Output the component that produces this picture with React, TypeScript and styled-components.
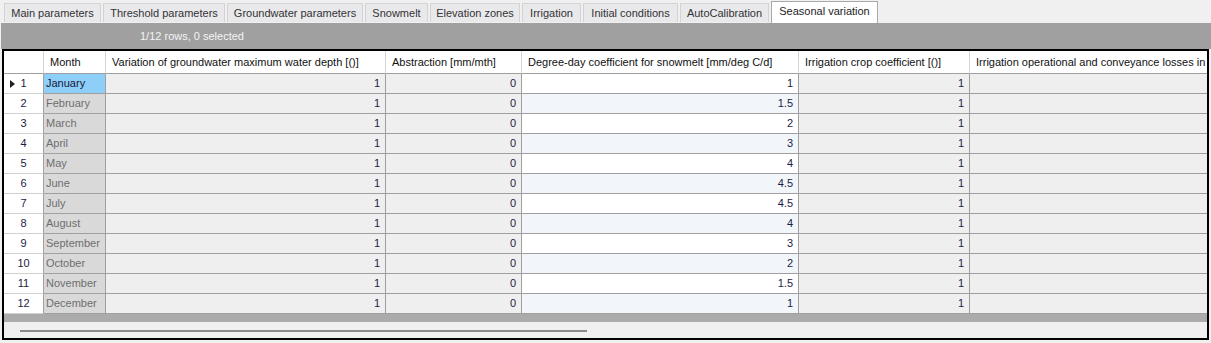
import React from "react";
import styled, { createGlobalStyle, css } from "styled-components";

const GlobalStyle = createGlobalStyle`
  html, body {
    margin: 0;
    padding: 0;
    background-color: #f0f0f0;
  }
  body {
    font-family: "Liberation Sans", Arial, sans-serif;
    font-size: 11px;
  }
`;

const COLUMNS = "40px 62px 280px 136px 277px 171px 320px";

const Page = styled.div`
  width: 1211px;
  height: 343px;
  overflow: hidden;
  background-color: #f0f0f0;
`;

const TabStrip = styled.div`
  display: flex;
  align-items: flex-start;
  gap: 2px;
  height: 23px;
  padding-left: 4px;
`;

const Tab = styled.div<{ $width: number; $active?: boolean }>`
  box-sizing: border-box;
  flex: 0 0 ${(p) => p.$width}px;
  height: 19px;
  margin-top: 3px;
  border: 1px solid #d3d3d6;
  border-bottom: none;
  background-color: #e9e9ec;
  color: #333;
  text-align: center;
  line-height: 18px;
  white-space: nowrap;
  overflow: hidden;

  ${(p) =>
    p.$active &&
    css`
      height: 22px;
      margin-top: 1px;
      border-color: #a9a9a9;
      background-color: #fff;
      color: #222;
      line-height: 19px;
    `}
`;

const StatusBar = styled.div`
  height: 26px;
  margin: 0 0 0 1px;
  background-color: #a0a0a0;
`;

const StatusText = styled.div`
  padding-left: 139px;
  line-height: 27px;
  color: #f4f4f4;
`;

const Grid = styled.div`
  box-sizing: border-box;
  width: 1207px;
  margin-left: 2px;
  border: 2px solid #000;
  overflow: hidden;
  background-color: #f0f0f0;
`;

const GridRow = styled.div<{ $header?: boolean }>`
  display: grid;
  grid-template-columns: ${COLUMNS};
  height: ${(p) => (p.$header ? 23 : 20)}px;
`;

const cellBase = css`
  box-sizing: border-box;
  border-right: 1px solid #a0a0a0;
  border-bottom: 1px solid #a0a0a0;
  white-space: nowrap;
  overflow: hidden;
`;

const HeaderCell = styled.div`
  ${cellBase};
  border-right-color: #d4d4d4;
  background-color: #fff;
  color: #111;
  padding-left: 6px;
  line-height: 22px;
`;

const RowHeaderCell = styled.div`
  ${cellBase};
  border-bottom-color: #d0d0d0;
  border-right-color: #a0a0a0;
  background-color: #fff;
  color: #1c1c44;
  text-align: center;
  line-height: 19px;
  position: relative;
`;

const RowMarker = styled.span`
  position: absolute;
  left: 6px;
  top: 6px;
  width: 0;
  height: 0;
  border-top: 4px solid transparent;
  border-bottom: 4px solid transparent;
  border-left: 5px solid #222;
`;

const MonthCell = styled.div<{ $selected?: boolean }>`
  ${cellBase};
  background-color: ${(p) => (p.$selected ? "#8dcff8" : "#d9d9d9")};
  color: ${(p) => (p.$selected ? "#161638" : "#6e6e6e")};
  padding-left: 2px;
  line-height: 19px;
`;

const NumCell = styled.div<{ $tone?: "plain" | "white" | "blue" }>`
  ${cellBase};
  background-color: ${(p) =>
    p.$tone === "white" ? "#fff" : p.$tone === "blue" ? "#f2f5fa" : "#efefef"};
  color: #1c1c44;
  text-align: right;
  padding-right: 5px;
  line-height: 19px;
`;

const BottomBand = styled.div`
  height: 8px;
  background-color: #ababab;
`;

const ScrollArea = styled.div`
  height: 16px;
  padding: 8px 0 0 16px;
  box-sizing: border-box;
  background-color: #f0f0f0;
`;

const ScrollThumb = styled.div`
  width: 567px;
  height: 2px;
  background-color: #8a8a8a;
`;

const tabs = [
  { label: "Main parameters", width: 97 },
  { label: "Threshold parameters", width: 122 },
  { label: "Groundwater parameters", width: 136 },
  { label: "Snowmelt", width: 63 },
  { label: "Elevation zones", width: 90 },
  { label: "Irrigation", width: 59 },
  { label: "Initial conditions", width: 95 },
  { label: "AutoCalibration", width: 89 },
  { label: "Seasonal variation", width: 107, active: true },
];

const headers = [
  "",
  "Month",
  "Variation of groundwater maximum water depth [()]",
  "Abstraction [mm/mth]",
  "Degree-day coefficient for snowmelt [mm/deg C/d]",
  "Irrigation crop coefficient [()]",
  "Irrigation operational and conveyance losses in percent [%]",
];

const rows = [
  { month: "January", degree: "1" },
  { month: "February", degree: "1.5" },
  { month: "March", degree: "2" },
  { month: "April", degree: "3" },
  { month: "May", degree: "4" },
  { month: "June", degree: "4.5" },
  { month: "July", degree: "4.5" },
  { month: "August", degree: "4" },
  { month: "September", degree: "3" },
  { month: "October", degree: "2" },
  { month: "November", degree: "1.5" },
  { month: "December", degree: "1" },
];

export default function App() {
  return (
    <Page>
      <GlobalStyle />
      <TabStrip>
        {tabs.map((t) => (
          <Tab key={t.label} $width={t.width} $active={t.active}>
            {t.label}
          </Tab>
        ))}
      </TabStrip>
      <StatusBar>
        <StatusText>1/12 rows, 0 selected</StatusText>
      </StatusBar>
      <Grid>
        <GridRow $header>
          {headers.map((h, i) => (
            <HeaderCell key={i}>{h}</HeaderCell>
          ))}
        </GridRow>
        {rows.map((r, i) => (
          <GridRow key={r.month}>
            <RowHeaderCell>
              {i === 0 && <RowMarker />}
              {i + 1}
            </RowHeaderCell>
            <MonthCell $selected={i === 0}>{r.month}</MonthCell>
            <NumCell>1</NumCell>
            <NumCell>0</NumCell>
            <NumCell $tone={i % 2 === 0 ? "white" : "blue"}>{r.degree}</NumCell>
            <NumCell>1</NumCell>
            <NumCell />
          </GridRow>
        ))}
        <BottomBand />
        <ScrollArea>
          <ScrollThumb />
        </ScrollArea>
      </Grid>
    </Page>
  );
}
